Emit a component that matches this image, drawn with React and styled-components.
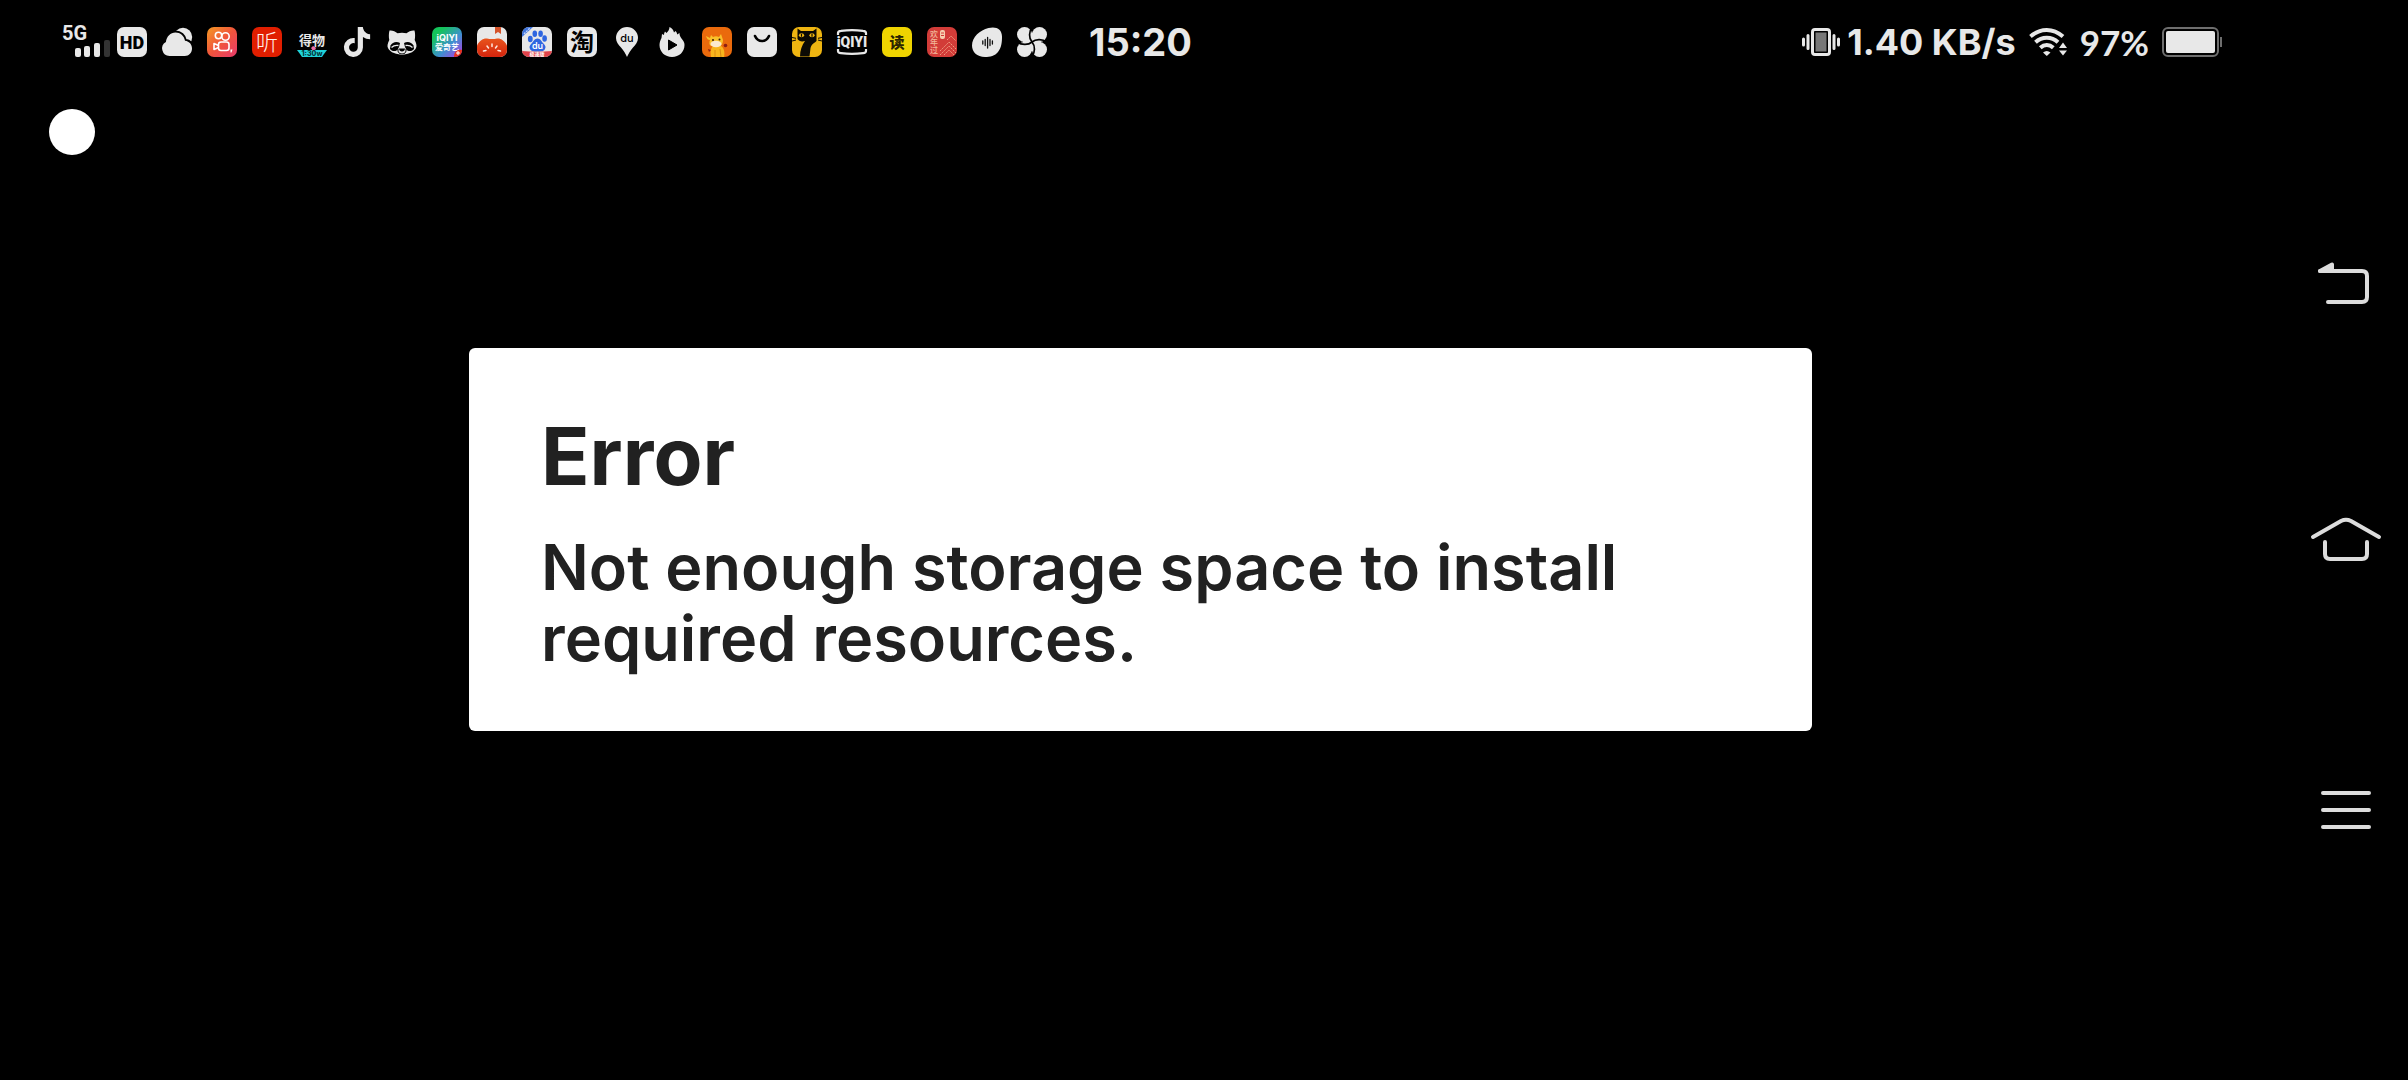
import React, { useState } from 'react';
import styled, { createGlobalStyle } from 'styled-components';
import { FaTiktok } from 'react-icons/fa6';

const light = '#e8e8e8';
const cjk = '"Noto Sans CJK SC", sans-serif';

const GlobalStyle = createGlobalStyle`
  * {
    box-sizing: border-box;
  }
  body {
    margin: 0;
    background: #000;
    font-family: Inter, "Noto Sans CJK SC", sans-serif;
  }
`;

const Screen = styled.div`
  display: flex;
  min-height: 100vh;
  background: #000;
`;

const Main = styled.main`
  flex: 1;
  min-width: 0;
  display: flex;
  flex-direction: column;
`;

const StatusBar = styled.header`
  display: flex;
  align-items: center;
  justify-content: space-between;
  height: 84px;
  padding: 0 59px 0 60px;
  color: ${light};

  svg {
    flex-shrink: 0;
    overflow: visible;
  }
`;

const StatusGroup = styled.div`
  display: flex;
  align-items: center;
  gap: ${(props) => props.$gap}px;
`;

const AppIcons = styled.ul`
  display: flex;
  gap: 15px;
  margin: 0;
  padding: 0;
  list-style: none;
`;

const AppIcon = styled.li`
  display: flex;
  justify-content: center;
  width: 30px;
  height: 30px;
`;

const Clock = styled.time`
  margin-left: 35px;
  font-size: 38px;
  font-weight: 700;
  line-height: 40px;
`;

const NetSpeed = styled.span`
  font-size: 36px;
  font-weight: 700;
  line-height: 40px;
  white-space: nowrap;
`;

const BatteryLevel = styled.span`
  font-family: Lato, sans-serif;
  font-size: 35px;
  font-weight: 700;
  line-height: 40px;
`;

const Toolbar = styled.div`
  display: flex;
  padding: 25px 49px 0;
`;

const RoundButton = styled.button`
  width: 46px;
  height: 46px;
  padding: 0;
  border: none;
  border-radius: 50%;
  background: #fff;
  cursor: pointer;
`;

const DialogArea = styled.div`
  flex: 1;
  display: flex;
  align-items: center;
  justify-content: center;
  padding-bottom: 156px;
`;

const Dialog = styled.section`
  width: 90%;
  max-width: 1343px;
  padding: 60px 72px 57px;
  border-radius: 6px;
  background: #fff;
  color: #212121;
`;

const DialogTitle = styled.h1`
  margin: 0 0 28px;
  font-size: 80px;
  font-weight: 700;
  line-height: 96px;
`;

const DialogText = styled.p`
  margin: 0;
  font-size: 63px;
  font-weight: 600;
  line-height: 71px;
`;

const NavBar = styled.nav`
  display: flex;
  flex-direction: column;
  width: 127px;
  padding: 135px 0 135px 3px;
`;

const NavButton = styled.button`
  flex: 1;
  display: flex;
  align-items: center;
  justify-content: center;
  padding: 0;
  border: none;
  background: none;
  color: #dcdcdc;
  cursor: pointer;
`;

const Icon = ({ children, ...rest }) => (
  <svg width="30" height="30" viewBox="0 0 30 30" aria-hidden="true" {...rest}>
    {children}
  </svg>
);

const Tile = ({ fill = light }) => <rect width="30" height="30" rx="7" fill={fill} />;

const SignalIcon = () => (
  <svg width="50" height="34" viewBox="0 0 50 34" role="img" aria-label="5G signal">
    <text x="2" y="15" fontFamily="Roboto, sans-serif" fontSize="20" fontWeight="700" fill={light}>5G</text>
    <rect x="15" y="23" width="6" height="9" rx="2" fill={light} />
    <rect x="24" y="21" width="6" height="11" rx="2" fill={light} />
    <rect x="34" y="18" width="6" height="14" rx="2" fill={light} />
    <rect x="44" y="15" width="6" height="17" rx="2" fill="#333" />
  </svg>
);

const HdIcon = () => (
  <Icon>
    <Tile />
    <text x="15" y="21.5" textAnchor="middle" fontFamily="Roboto, sans-serif" fontSize="18" fontWeight="900" fill="#000">HD</text>
  </Icon>
);

const CloudIcon = () => (
  <Icon>
    <circle cx="21" cy="10" r="9.2" fill={light} />
    <path
      d="M7.500 29a7.500 7.500 0 0 1-3.600-14C4.500 9.500 8.500 5.500 13.500 5.500c4.800 0 8.600 3.200 9.500 8.300C27.500 14.500 30 17.500 30 21.500c0 4.300-3 7.500-7.200 7.500z"
      fill={light}
      stroke="#000"
      strokeWidth="4"
      paintOrder="stroke"
    />
  </Icon>
);

const KuaishouIcon = () => (
  <Icon>
    <defs>
      <linearGradient id="kuaishou" x1="0" y1="0" x2="1" y2="1">
        <stop offset="0" stopColor="#f59a23" />
        <stop offset="0.5" stopColor="#f0543c" />
        <stop offset="1" stopColor="#e83a6c" />
      </linearGradient>
    </defs>
    <Tile fill="url(#kuaishou)" />
    <g fill="none" stroke="#fff" strokeWidth="1.6" strokeLinejoin="round">
      <circle cx="11.500" cy="8.500" r="3.200" />
      <circle cx="18.500" cy="9.500" r="3.700" />
      <rect x="11.500" y="15" width="10.500" height="8.500" rx="2.500" />
      <path d="M11.500 18.500 7 16.500v6l4.500-2" />
    </g>
    <path d="M23.500 22.500h2l-1 3h-1z" fill="#fff" />
  </Icon>
);

const TingIcon = () => (
  <Icon>
    <Tile fill="#e11e00" />
    <text x="15" y="23" textAnchor="middle" fontFamily={cjk} fontSize="22" fontWeight="300" fill="#fff0ea">听</text>
  </Icon>
);

const DewuIcon = () => (
  <Icon>
    <text x="15" y="18" textAnchor="middle" fontFamily={cjk} fontSize="13" fontWeight="700" fill={light}>得物</text>
    <path d="M0 23h30l-3 4-2 3H5l-2-3z" fill="#1fd3da" />
    <path d="m14 21 2-2 2 1 1 2-3 2z" fill="#ee6fa8" />
    <text x="15" y="29" textAnchor="middle" fontFamily="Inter, sans-serif" fontSize="7" fontWeight="800" fill="#06383c">1:30w</text>
  </Icon>
);

const RaccoonIcon = () => (
  <Icon>
    <path
      d="M2.500 3.500C5 3 8.500 4.500 10.500 6.300c3-.8 6-.8 9 0C21.500 4.500 25 3 27.500 3.500c.8 3 .8 6.500.2 9.500 1.800 3.500 2.300 6.500 1.300 8-1.500 3.500-6 5.500-9.500 6L15 28l-4.500-1C7 26.500 2.500 24.500 1 21c-1-1.500-.5-4.500 1.300-8-.6-3-.6-6.500.2-9.500z"
      fill={light}
    />
    <path d="M3.500 18.500c2-3.500 6-4.500 9.500-2.500l-1 4c-1 2.500-2 3.500-3.500 4-2.500.4-4.500-.5-5.500-2z" fill="#000" />
    <path d="M26.500 18.500c-2-3.500-6-4.500-9.500-2.500l1 4c1 2.500 2 3.500 3.500 4 2.500.4 4.500-.5 5.500-2z" fill="#000" />
    <path d="M4.500 20.500c2-2 4-2.500 7-2M25.500 20.500c-2-2-4-2.500-7-2" stroke={light} strokeWidth="1.300" fill="none" />
    <path d="M12 21.500h6c0 2-1.500 3-3 3s-3-1-3-3z" fill="#000" />
    <path d="M11 22c-.5 3 1 5 4 5s4.500-2 4-5" stroke="#000" strokeWidth="1" fill="none" />
  </Icon>
);

const IqiyiIcon = () => (
  <Icon>
    <defs>
      <linearGradient id="iqiyi" x1="0" y1="0" x2="1" y2="1">
        <stop offset="0.2" stopColor="#14c35a" />
        <stop offset="0.6" stopColor="#3f8fd0" />
        <stop offset="0.9" stopColor="#9b4be0" />
      </linearGradient>
    </defs>
    <Tile fill="url(#iqiyi)" />
    <text x="15" y="14" textAnchor="middle" fontFamily="Inter, sans-serif" fontSize="9" fontWeight="700" fill="#fff">iQIYI</text>
    <text x="15" y="23" textAnchor="middle" fontFamily={cjk} fontSize="8" fontWeight="700" fill="#fff">爱奇艺</text>
    <path d="M22 30c0-5 3-8 8-7 0 4-3 7-8 7z" fill="#e8321e" />
    <path d="M26 24v4M24 26h4" stroke="#fff" strokeWidth="1" />
  </Icon>
);

const TomatoIcon = () => (
  <Icon>
    <defs>
      <clipPath id="tomatoClip">
        <rect width="30" height="30" rx="7" />
      </clipPath>
      <linearGradient id="tomato" x1="0" y1="0" x2="0" y2="1">
        <stop offset="0" stopColor="#e8541c" />
        <stop offset="1" stopColor="#d3210c" />
      </linearGradient>
    </defs>
    <g clipPath="url(#tomatoClip)">
      <rect width="30" height="30" fill={light} />
      <path d="M18 0h6v7l-3-2-3 2z" fill="#d5532a" />
      <path d="M-1 24c0-8 6-13 11-12.500 3 .8 7 .8 10 0C25 11 31 16 31 24v7H-1z" fill="url(#tomato)" />
      <path d="M15 17v2.500M10 19l1.500 2M20 19l-1.500 2M6.500 24l2.500-.5M23.500 24l-2.500-.5" stroke="#ffe9e0" strokeWidth="1.500" strokeLinecap="round" />
    </g>
  </Icon>
);

const BaiduIcon = () => (
  <Icon>
    <defs>
      <clipPath id="baiduClip">
        <rect width="30" height="30" rx="7" />
      </clipPath>
    </defs>
    <g clipPath="url(#baiduClip)">
      <rect width="30" height="30" fill={light} />
      <path d="M0 0h11L0 10z" fill="#3e74dd" />
      <path d="m2 7 6-6" stroke="#bcd0fa" strokeWidth="1.400" strokeDasharray="2 1" />
      <g fill="#2f66e0">
        <ellipse cx="8.300" cy="12" rx="2.400" ry="3.200" />
        <ellipse cx="12.800" cy="6.800" rx="2.300" ry="3.300" />
        <ellipse cx="18.600" cy="6.800" rx="2.300" ry="3.300" />
        <ellipse cx="22.600" cy="11.500" rx="2.300" ry="3.200" />
        <path d="M15.500 11.500c3 0 4 3 6 5s2.500 3.500 1.500 5.500-3 2.500-7.500 2.500S9 24 8 22s-.5-3.500 1.500-5.500 3-5 6-5z" />
      </g>
      <text x="15.500" y="22" textAnchor="middle" fontFamily="Inter, sans-serif" fontSize="9" fontWeight="600" fill="#fff">du</text>
      <path d="M0 24c10 1 20 1 30 0v6H0z" fill="#e0434a" />
      <text x="15" y="29" textAnchor="middle" fontFamily={cjk} fontSize="5" fontWeight="700" fill="#fff">极速版</text>
    </g>
  </Icon>
);

const TaobaoIcon = () => (
  <Icon>
    <Tile />
    <text x="15" y="23.500" textAnchor="middle" fontFamily={cjk} fontSize="24" fontWeight="700" fill="#000">淘</text>
  </Icon>
);

const DuPinIcon = () => (
  <Icon>
    <path d="M15 0a11 11 0 0 1 11 11c0 4-2.500 7-5 9.500-2.500 2.700-4.500 6-6 9.500-1.500-3.500-3.500-6.800-6-9.500C6.500 18 4 15 4 11A11 11 0 0 1 15 0z" fill={light} />
    <text x="15" y="15" textAnchor="middle" fontFamily="Inter, sans-serif" fontSize="11" fontWeight="500" fill="#000">du</text>
  </Icon>
);

const FlameIcon = () => (
  <Icon>
    <path
      d="M12.500 0c2.500 1.300 4 3 4.500 5.500L18.500 4c1 1 1.500 2 1.700 3.500L22.500 6c0 2 .5 3.500 2 5.500 2 2.500 3 4 3 6.500C27.500 25 22 30 15 30S2.500 25 2.500 18c0-3 1-5 2-7l.5-4 2 1c0-1.500.5-2.500 1-3.500l1.500 1.500C11 4.500 12.500 2.500 12.500 0z"
      fill={light}
    />
    <path d="m11.500 13 8.500 5-8.500 5z" fill="#000" stroke="#000" strokeWidth="1" strokeLinejoin="round" />
  </Icon>
);

const CalfIcon = () => (
  <Icon>
    <Tile fill="#ea6a0c" />
    <path d="M9 30c-1-6 0-9 2-11h8c3 2 4 6 3 11z" fill="#f7b51d" />
    <path d="m4 9 4 2 1-3 2 2c2-1 4-1 6 0l2-3 1 3 1 3c0 3-1 5-3 6H9c-2-1-2-4-1-6-2 0-3-1-4-4z" fill="#f9c02a" />
    <ellipse cx="14" cy="17" rx="5.500" ry="3.200" fill="#fbead0" />
    <circle cx="11" cy="13" r="1" fill="#3a1705" />
    <circle cx="17.500" cy="12.500" r="1" fill="#3a1705" />
    <circle cx="23.500" cy="18.500" r="1.800" fill="#8e1f12" />
    <path d="m6 22 3 1-2 2z" fill="#8e1f12" />
    <path d="M13 23v7M18 22l1 8" stroke="#d98a12" strokeWidth="1" />
  </Icon>
);

const SmileIcon = () => (
  <Icon>
    <Tile />
    <path d="M8 9c1.500 3.500 4 5 7 5s5.500-1.500 7-5" fill="none" stroke="#000" strokeWidth="2.600" strokeLinecap="round" />
  </Icon>
);

const SevenCatIcon = () => (
  <Icon>
    <Tile fill="#efb511" />
    <path d="M5.500 1.500 9 4h12l3.500-2.500V14c-2 2-5 3-6 7l-1 8.500H8c0-6 2-11.500 5-15.500-3 .8-6 .5-7.500-2z" fill="#0c0a04" />
    <ellipse cx="9.500" cy="8.300" rx="2.600" ry="2" fill="#efb511" />
    <ellipse cx="20" cy="8.300" rx="2.600" ry="2" fill="#efb511" />
    <path d="M9.500 6.800v3M20 6.800v3" stroke="#0c0a04" strokeWidth="1.200" />
    <path d="M0 10.500l4 .8M0 14l4-1M30 10.500l-4 .8M30 14l-4-1" stroke="#0c0a04" strokeWidth="1" />
  </Icon>
);

const IqiyiTvIcon = () => (
  <Icon>
    <path d="M1 8V6c0-1.500 1-2 3-2.200 7.500-1 14.500-1 22 0 2 .2 3 .7 3 2.200v2" fill="none" stroke={light} strokeWidth="2.200" />
    <path d="M1 22v2c0 1.500 1 2 3 2.200 7.500 1 14.500 1 22 0 2-.2 3-.7 3-2.200v-2" fill="none" stroke={light} strokeWidth="2.200" />
    <text x="15" y="20" textAnchor="middle" fontFamily="Roboto, sans-serif" fontSize="14" fontWeight="900" fill={light}>iQIYI</text>
  </Icon>
);

const ReadIcon = () => (
  <Icon>
    <Tile fill="#efd400" />
    <text x="15" y="21" textAnchor="middle" fontFamily={cjk} fontSize="15" fontWeight="900" fill="#2a2400">读</text>
  </Icon>
);

const AlmanacIcon = () => (
  <Icon>
    <Tile fill="#d23c38" />
    <g fontFamily={cjk} fontSize="8" fontWeight="500" fill="#f3b79a">
      <text x="3" y="10">欢</text>
      <text x="3" y="18">年</text>
      <text x="3" y="26">过</text>
    </g>
    <rect x="13" y="3" width="5" height="9" rx="2" fill="#f6cfae" />
    <path d="M14 6h3M14 8.500h3" stroke="#d23c38" strokeWidth="1" />
    <g fill="none" stroke="#ef9a80" strokeWidth="1" strokeDasharray="2 1">
      <path d="m13 24 9-9 7 7" />
      <path d="m13 28 9-9 7 7" />
      <path d="m17 28 5-5 5 5" />
      <path d="m20 13 4-4 5 5" />
    </g>
  </Icon>
);

const EggWaveIcon = () => (
  <Icon>
    <path d="M16.500 1C24 -1 30 2 30 9.500c0 6-.5 11-4 15.500-3 4-8 5-13 5C5 30 0 25 0 18.500 0 10 8 3 16.500 1z" fill={light} />
    <path d="M10.800 14v3M13.200 12.500v6M15.600 10.500v10.500M18 12.500v6M20.400 14v3" stroke="#111" strokeWidth="1.300" strokeLinecap="round" />
  </Icon>
);

const PinwheelIcon = () => (
  <Icon>
    <g fill={light}>
      <circle cx="7.500" cy="7.500" r="7.500" />
      <circle cx="22.500" cy="7.500" r="7.500" />
      <circle cx="7.500" cy="22.500" r="7.500" />
      <circle cx="22.500" cy="22.500" r="7.500" />
      <rect x="6" y="6" width="18" height="18" />
    </g>
    <path
      d="M15 15C11.500 11 12 4.500 15 0M15 15c4-3.500 10.500-3 15 0M15 15c3.500 4 3 10.500 0 15M15 15c-4 3.500-10.500 3-15 0"
      fill="none"
      stroke="#000"
      strokeWidth="1.700"
    />
  </Icon>
);

const VibrateIcon = () => (
  <svg width="38" height="28" viewBox="0 0 38 28" role="img" aria-label="Vibrate">
    <rect x="10.500" y="1.500" width="17" height="25" rx="2.500" fill="none" stroke={light} strokeWidth="3" />
    <rect x="13" y="4" width="12" height="20" fill="#777" stroke="#000" strokeWidth="1" />
    <path d="M6 7.500v13M32 7.500v13" stroke={light} strokeWidth="3" strokeLinecap="round" />
    <path d="M1.500 11v6M36.500 11v6" stroke={light} strokeWidth="3" strokeLinecap="round" />
  </svg>
);

const WifiIcon = () => (
  <svg width="38" height="28" viewBox="0 0 38 28" role="img" aria-label="Wi-Fi">
    <g fill="none" stroke={light} strokeWidth="4">
      <path d="M1.500 8.500C11.500-.3 24-.3 34 8.500" />
      <path d="M6.500 14.300c6.500-6 16-6 22.500 0" />
      <path d="M11.300 19.800c4-3.600 9-3.600 13 0" />
    </g>
    <path d="m14 24.500c2.500-2 5-2 7.500 0L17.800 28z" fill={light} />
    <path d="m34 14.500 4 5.500h-8zM34 27.500l4-5h-8z" fill={light} stroke="#000" strokeWidth="1" paintOrder="stroke" />
  </svg>
);

const BatteryIcon = () => (
  <svg width="60" height="30" viewBox="0 0 60 30" role="img" aria-label="Battery">
    <rect x="1" y="1" width="55" height="28" rx="5" fill="none" stroke="#6e6e6e" strokeWidth="2" />
    <rect x="4" y="4" width="49" height="22" rx="2" fill={light} />
    <rect x="58" y="10" width="2" height="10" fill="#6e6e6e" />
  </svg>
);

const navIcon = { width: 72, height: 72, viewBox: '0 0 72 72', fill: 'none', stroke: 'currentColor', strokeWidth: 4, strokeLinecap: 'round', strokeLinejoin: 'round' };

const BackGlyph = () => (
  <svg {...navIcon}>
    <path d="M10 37h42q5 0 5 5v21q0 5-5 5H18" />
    <path d="m10 37 12-6.500V37z" fill="currentColor" />
  </svg>
);

const HomeGlyph = () => (
  <svg {...navIcon}>
    <path d="M3 33 31 17q5-2.500 10 0L69 33" />
    <path d="M15 38v12q0 5 5 5h32q5 0 5-5V38" />
  </svg>
);

const MenuGlyph = () => (
  <svg {...navIcon}>
    <path d="M13 19h46M13 36h46M13 53h46" />
  </svg>
);

const notifications = [
  { name: 'HD', icon: HdIcon },
  { name: 'Weather', icon: CloudIcon },
  { name: 'Kuaishou', icon: KuaishouIcon },
  { name: 'Listen', icon: TingIcon },
  { name: 'Dewu', icon: DewuIcon },
  { name: 'Douyin', icon: () => <FaTiktok size={30} color={light} /> },
  { name: 'Raccoon', icon: RaccoonIcon },
  { name: 'iQIYI', icon: IqiyiIcon },
  { name: 'Tomato Novel', icon: TomatoIcon },
  { name: 'Baidu', icon: BaiduIcon },
  { name: 'Taobao', icon: TaobaoIcon },
  { name: 'Baidu Maps', icon: DuPinIcon },
  { name: 'Huoshan', icon: FlameIcon },
  { name: 'Calf', icon: CalfIcon },
  { name: 'Shop', icon: SmileIcon },
  { name: 'Seven Cat', icon: SevenCatIcon },
  { name: 'iQIYI TV', icon: IqiyiTvIcon },
  { name: 'Reader', icon: ReadIcon },
  { name: 'Almanac', icon: AlmanacIcon },
  { name: 'Recorder', icon: EggWaveIcon },
  { name: 'Pinwheel', icon: PinwheelIcon },
];

const navItems = [
  { name: 'Back', icon: BackGlyph },
  { name: 'Home', icon: HomeGlyph },
  { name: 'Recent apps', icon: MenuGlyph },
];

const App = () => {
  const [showDialog, setShowDialog] = useState(true);

  return (
    <>
      <GlobalStyle />
      <Screen>
        <Main>
          <StatusBar>
            <StatusGroup $gap={7}>
              <SignalIcon />
              <AppIcons>
                {notifications.map(({ name, icon: Glyph }) => (
                  <AppIcon key={name} title={name}>
                    <Glyph />
                  </AppIcon>
                ))}
              </AppIcons>
              <Clock>15:20</Clock>
            </StatusGroup>
            <StatusGroup $gap={13}>
              <StatusGroup $gap={7}>
                <VibrateIcon />
                <NetSpeed>1.40 KB/s</NetSpeed>
              </StatusGroup>
              <WifiIcon />
              <BatteryLevel>97%</BatteryLevel>
              <BatteryIcon />
            </StatusGroup>
          </StatusBar>
          <Toolbar>
            <RoundButton aria-label="Toggle message" onClick={() => setShowDialog(!showDialog)} />
          </Toolbar>
          <DialogArea>
            {showDialog && (
              <Dialog role="alertdialog" aria-labelledby="error-title" aria-describedby="error-text">
                <DialogTitle id="error-title">Error</DialogTitle>
                <DialogText id="error-text">
                  Not enough storage space to install required resources.
                </DialogText>
              </Dialog>
            )}
          </DialogArea>
        </Main>
        <NavBar>
          {navItems.map(({ name, icon: Glyph }) => (
            <NavButton key={name} aria-label={name}>
              <Glyph />
            </NavButton>
          ))}
        </NavBar>
      </Screen>
    </>
  );
};

export default App;
